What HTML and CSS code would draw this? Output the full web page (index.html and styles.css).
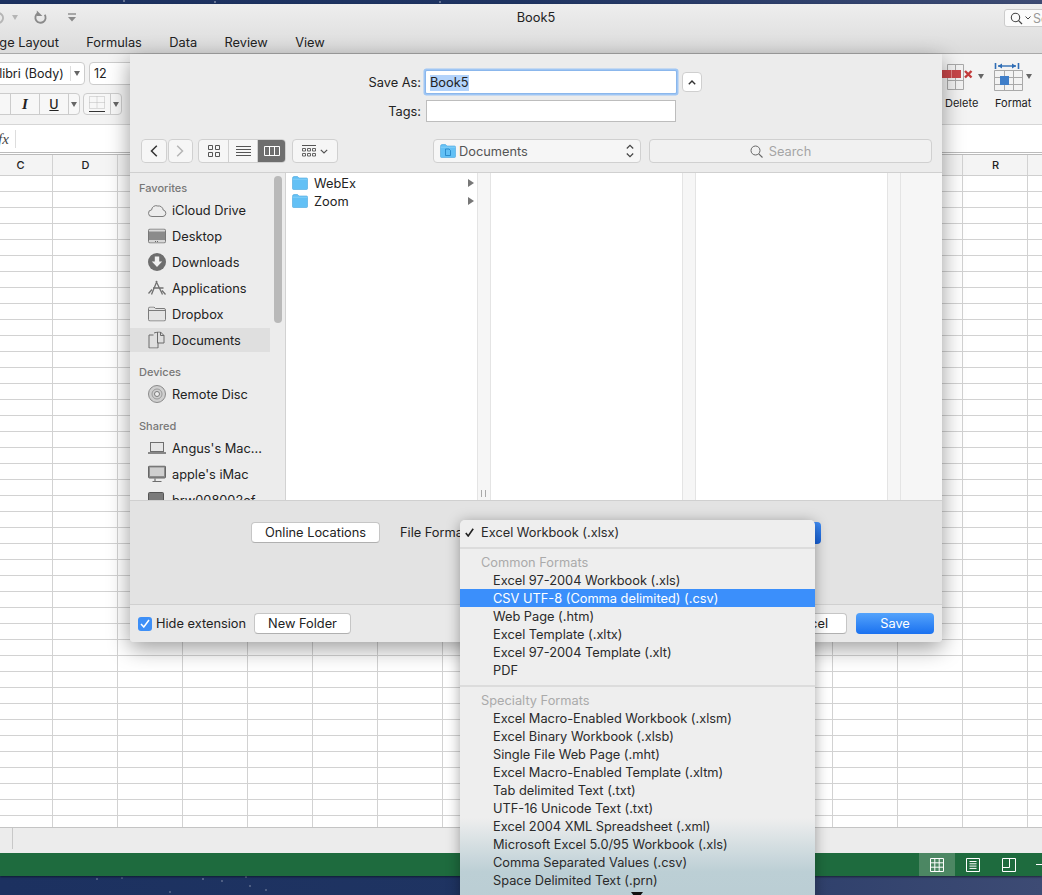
FILE: index.html
```html
<!DOCTYPE html>
<html lang="en">
<head>
    <meta charset="UTF-8">
    <meta name="viewport" content="width=device-width, initial-scale=1.0">
    <title>Book5 - Save As</title>
    <link rel="stylesheet" href="styles.css">
</head>
<body>
    <svg class="defs" width="0" height="0">
        <symbol id="folder" viewBox="0 0 16 14">
            <path d="M0.5 2.5Q0.5 0.5 2 0.5H5.5L7 2H14.5Q15.5 2 15.5 3V12.5Q15.5 13.5 14.5 13.5H1.5Q0.5 13.5 0.5 12.5Z" fill="#62c0f5" stroke="#4aa6de" stroke-width="0.6"/>
            <path d="M0.6 3.2H15.4" stroke="#8fd3f8" stroke-width="0.8"/>
        </symbol>
    </svg>

    <!-- excel window behind the dialog -->
    <div class="excel">
        <div class="titlebar">
            <div class="quick">
                <svg class="undo" width="12" height="14" viewBox="0 0 12 14"><path d="M1 3A5 5 0 1 1 1 11" fill="none" stroke="#b5b5b5" stroke-width="2"/></svg>
                <span class="tiny-arrow light"></span>
                <svg class="redo" width="14" height="15" viewBox="0 0 15 16"><path d="M4 3.5A5.5 5.5 0 1 0 11.5 5" fill="none" stroke="#8a8a8a" stroke-width="2"/><path d="M3 0.5V6.5H9Z" fill="#8a8a8a"/></svg>
                <svg class="customize" width="10" height="9" viewBox="0 0 10 9"><path d="M1 1H9" stroke="#8a8a8a" stroke-width="1.4"/><path d="M1 4H9L5 8.5Z" fill="#8a8a8a"/></svg>
            </div>
            <div class="doc-title">Book5</div>
            <div class="sheet-search">
                <svg width="13" height="13" viewBox="0 0 13 13"><circle cx="5.5" cy="5.5" r="4.2" fill="none" stroke="#444" stroke-width="1.1"/><path d="M8.6 8.6L12 12" stroke="#444" stroke-width="1.2"/></svg>
                <svg width="6" height="4" viewBox="0 0 6 4"><path d="M0.5 0.5L3 3L5.5 0.5" fill="none" stroke="#444"/></svg>
                <span>Se</span>
            </div>
            <div class="tabs">
                <span class="tab first">Page Layout</span>
                <span class="tab">Formulas</span>
                <span class="tab">Data</span>
                <span class="tab">Review</span>
                <span class="tab">View</span>
            </div>
        </div>

        <div class="ribbon">
            <div class="ribbon-left">
                <div class="ribbon-row">
                    <div class="combo font-combo"><span>Calibri (Body)</span><i class="combo-arrow"></i></div>
                    <div class="combo size-combo"><span>12</span></div>
                </div>
                <div class="ribbon-row second">
                    <div class="btn-group style-group">
                        <span class="cell bold"></span>
                        <span class="cell italic">I</span>
                        <span class="cell under">U</span>
                        <span class="cell arrow-cell"><span class="tiny-arrow"></span></span>
                    </div>
                    <div class="btn-group border-group">
                        <span class="cell border-cell">
                            <svg width="18" height="18" viewBox="0 0 18 18"><path d="M1.5 1.5H16.5V13.5H1.5ZM9 1.5V13.5M1.5 7.5H16.5" fill="none" stroke="#bbb" stroke-dasharray="1 1"/><path d="M1 16.5H17" stroke="#333"/></svg>
                        </span>
                        <span class="cell arrow-cell"><span class="tiny-arrow"></span></span>
                    </div>
                </div>
            </div>
            <div class="ribbon-right">
                <div class="ribbon-tool delete-tool">
                    <div class="tool-icon">
                        <svg width="34" height="28" viewBox="0 0 34 28"><path d="M5.5 1.5H21.5V26.5H5.5ZM13.5 1.5V26.5M5.5 17.5H21.5" fill="none" stroke="#a9a9a9"/><rect x="0" y="7" width="19" height="8" fill="#c8474a"/><path d="M9.5 7V15" stroke="#e48a8a"/><path d="M23 8L29.5 14.5M29.5 8L23 14.5" stroke="#c23a3a" stroke-width="2.4"/></svg>
                        <span class="tiny-arrow"></span>
                    </div>
                    <span class="tool-label">Delete</span>
                </div>
                <div class="ribbon-tool format-tool">
                    <div class="tool-icon">
                        <svg width="30" height="28" viewBox="0 0 30 28"><path d="M1.5 0V6M24.5 0V6" stroke="#2f6db5" stroke-width="1.6"/><path d="M4 3H22" stroke="#2f6db5" stroke-width="1.4"/><path d="M4 3L8 0.5V5.5ZM22 3L18 0.5V5.5Z" fill="#2f6db5"/><path d="M0.5 7.5H28.5V27.5H0.5ZM10.5 7.5V27.5M19.5 7.5V27.5M0.5 14.5H28.5M0.5 21.5H28.5" fill="none" stroke="#a9a9a9"/><rect x="6" y="13" width="9" height="9" fill="#3f7ec9"/></svg>
                        <span class="tiny-arrow"></span>
                    </div>
                    <span class="tool-label">Format</span>
                </div>
            </div>
        </div>

        <div class="formula-bar"><span class="fx">fx</span></div>

        <div class="col-headers">
            <span class="col-name">C</span>
            <span class="col-name">D</span>
            <span class="col-gap"></span>
            <span class="col-name">R</span>
        </div>
        <div class="grid"></div>

        <div class="sheet-bar"><span class="sheet-line"></span></div>
        <div class="status-bar">
            <span class="view-btn on">
                <svg width="14" height="14" viewBox="0 0 14 14"><path d="M0.5 0.5H13.5V13.5H0.5ZM4.8 0.5V13.5M9.2 0.5V13.5M0.5 4.8H13.5M0.5 9.2H13.5" fill="none" stroke="#fff"/></svg>
            </span>
            <span class="view-btn">
                <svg width="14" height="14" viewBox="0 0 14 14"><path d="M0.5 0.5H13.5V13.5H0.5Z" fill="none" stroke="#fff"/><path d="M3.5 3.5H10.5M3.5 5.8H10.5M3.5 8.1H10.5M3.5 10.4H10.5" stroke="#fff"/></svg>
            </span>
            <span class="view-btn">
                <svg width="14" height="14" viewBox="0 0 14 14"><path d="M0.5 0.5H13.5V13.5H0.5ZM0.5 9.5H7.5V0.5" fill="none" stroke="#fff"/></svg>
            </span>
            <span class="zoom-minus"></span>
        </div>
    </div>

    <!-- save dialog -->
    <div class="dialog">
        <div class="dialog-head">
            <div class="name-row">
                <label class="field-label">Save As:</label>
                <div class="name-field"><span class="selected">Book5</span></div>
                <button class="collapse-btn">
                    <svg width="8" height="5" viewBox="0 0 8 5"><path d="M0.8 4.2L4 1L7.2 4.2" fill="none" stroke="#333" stroke-width="1.4"/></svg>
                </button>
            </div>
            <div class="tags-row">
                <label class="field-label">Tags:</label>
                <div class="tags-field"></div>
            </div>
            <div class="toolbar">
                <div class="seg nav">
                    <span class="seg-btn back"><svg width="8" height="12" viewBox="0 0 8 12"><path d="M6.8 0.8L1.5 6L6.8 11.2" fill="none" stroke="#333" stroke-width="1.5"/></svg></span>
                    <span class="seg-btn forward"><svg width="8" height="12" viewBox="0 0 8 12"><path d="M1.2 0.8L6.5 6L1.2 11.2" fill="none" stroke="#b5b5b5" stroke-width="1.5"/></svg></span>
                </div>
                <div class="seg views">
                    <span class="seg-btn"><svg width="12" height="12" viewBox="0 0 12 12"><path d="M0.5 0.5H4.5V4.5H0.5ZM7.5 0.5H11.5V4.5H7.5ZM0.5 7.5H4.5V11.5H0.5ZM7.5 7.5H11.5V11.5H7.5Z" fill="none" stroke="#555"/></svg></span>
                    <span class="seg-btn"><svg width="15" height="11" viewBox="0 0 15 11"><path d="M0 0.5H15M0 3.5H15M0 6.5H15M0 9.5H15" stroke="#555"/></svg></span>
                    <span class="seg-btn active"><svg width="16" height="10" viewBox="0 0 16 10"><path d="M0.5 0.5H15.5V9.5H0.5ZM5.5 0.5V9.5M10.5 0.5V9.5" fill="none" stroke="#fff"/></svg></span>
                </div>
                <div class="seg arrange">
                    <svg width="14" height="12" viewBox="0 0 14 12"><path d="M0 0.5H14" stroke="#555"/><path d="M0.5 3.5H3.5V6H0.5ZM5.5 3.5H8.5V6H5.5ZM10.5 3.5H13.5V6H10.5ZM0.5 8.5H3.5V11H0.5ZM5.5 8.5H8.5V11H5.5ZM10.5 8.5H13.5V11H10.5Z" fill="none" stroke="#555" stroke-width="0.9"/></svg>
                    <svg width="8" height="5" viewBox="0 0 8 5"><path d="M0.8 0.8L4 4L7.2 0.8" fill="none" stroke="#555" stroke-width="1.2"/></svg>
                </div>
                <div class="where">
                    <svg class="where-icon" width="16" height="14" viewBox="0 0 16 14"><use href="#folder"/><path d="M5.5 5H9L10.5 6.5V11.5H5.5Z" fill="none" stroke="#1f7fc0" stroke-width="0.8"/></svg>
                    <span class="where-name">Documents</span>
                    <svg class="updown" width="8" height="14" viewBox="0 0 8 14"><path d="M0.8 4.5L4 1.3L7.2 4.5M0.8 9.5L4 12.7L7.2 9.5" fill="none" stroke="#444" stroke-width="1.2"/></svg>
                </div>
                <div class="search">
                    <svg width="13" height="13" viewBox="0 0 13 13"><circle cx="5.5" cy="5.5" r="4.5" fill="none" stroke="#666"/><path d="M8.8 8.8L12.5 12.5" stroke="#666" stroke-width="1.1"/></svg>
                    <span>Search</span>
                </div>
            </div>
        </div>

        <div class="browser">
            <div class="sidebar">
                <div class="side-label">Favorites</div>
                <div class="side-item">
                    <svg width="19" height="14" viewBox="0 0 19 14"><path d="M4 13.5A3.3 3.3 0 0 1 3.6 6.9A4.5 4.5 0 0 1 9.8 3A4.6 4.6 0 0 1 15.2 7A3.3 3.3 0 0 1 15 13.5Z" fill="none" stroke="#7b7b7b"/></svg>
                    <span>iCloud Drive</span>
                </div>
                <div class="side-item">
                    <svg width="18" height="15" viewBox="0 0 18 15"><rect x="0.5" y="0.5" width="17" height="14" rx="1.5" fill="#d8d8d8" stroke="#777"/><rect x="1" y="3" width="16" height="8.5" fill="#8b8b8b"/><path d="M7 13H11" stroke="#666" stroke-dasharray="1 1"/></svg>
                    <span>Desktop</span>
                </div>
                <div class="side-item">
                    <svg width="18" height="18" viewBox="0 0 18 18"><circle cx="9" cy="9" r="9" fill="#6e6e6e"/><path d="M6.8 3.5H11.2V8.5H14.2L9 14L3.8 8.5H6.8Z" fill="#f0f0f0"/></svg>
                    <span>Downloads</span>
                </div>
                <div class="side-item">
                    <svg width="18" height="17" viewBox="0 0 18 17"><path d="M9 1.5L3.5 15M8 1.5L14.5 15M5 8.5H15.5M0.5 14L4 10M17.5 15L14 11" fill="none" stroke="#707070" stroke-width="1.3"/></svg>
                    <span>Applications</span>
                </div>
                <div class="side-item">
                    <svg width="18" height="15" viewBox="0 0 18 15"><path d="M0.5 2Q0.5 0.5 2 0.5H6L7.5 2H16Q17.5 2 17.5 3.5V13Q17.5 14.5 16 14.5H2Q0.5 14.5 0.5 13Z" fill="#e4e4e4" stroke="#7b7b7b"/><path d="M0.5 4H17.5" stroke="#7b7b7b"/></svg>
                    <span>Dropbox</span>
                </div>
                <div class="side-item selected-item">
                    <svg width="17" height="17" viewBox="0 0 17 17"><path d="M5.5 3.5H1V16.5H10V11M6 1.5L9.5 0.5V11.5H16V4L12.5 0.5H9.5" fill="none" stroke="#6a6a6a"/><path d="M12.5 0.5V4H16" fill="none" stroke="#6a6a6a"/></svg>
                    <span>Documents</span>
                </div>
                <div class="side-label gap first-gap">Devices</div>
                <div class="side-item">
                    <svg width="18" height="18" viewBox="0 0 18 18"><circle cx="9" cy="9" r="8.5" fill="#cfcfcf" stroke="#8a8a8a"/><circle cx="9" cy="9" r="5" fill="none" stroke="#9a9a9a"/><circle cx="9" cy="9" r="2.5" fill="#eee" stroke="#7b7b7b"/></svg>
                    <span>Remote Disc</span>
                </div>
                <div class="side-label gap">Shared</div>
                <div class="side-item">
                    <svg width="18" height="12" viewBox="0 0 18 12"><rect x="2.5" y="0.5" width="13" height="9" fill="#e6e6e6" stroke="#6e6e6e"/><path d="M0 11H18" stroke="#6e6e6e" stroke-width="1.6"/></svg>
                    <span>Angus's Mac...</span>
                </div>
                <div class="side-item">
                    <svg width="18" height="17" viewBox="0 0 18 17"><rect x="0.5" y="0.5" width="17" height="12" rx="1" fill="#8b8b8b" stroke="#666"/><rect x="2" y="2" width="14" height="8.5" fill="#cfcfcf"/><path d="M7 13V15.5M4.5 16H13.5" stroke="#6e6e6e" stroke-width="1.2"/></svg>
                    <span>apple's iMac</span>
                </div>
                <div class="side-item">
                    <svg width="16" height="16" viewBox="0 0 16 16"><rect x="0.5" y="0.5" width="15" height="15" rx="1" fill="#7b7b7b" stroke="#555"/></svg>
                    <span>brw008002ef</span>
                </div>
            </div>
            <div class="side-scroll"></div>
            <div class="column first-col">
                <div class="file-row">
                    <svg width="16" height="14" viewBox="0 0 16 14"><use href="#folder"/></svg>
                    <span>WebEx</span>
                    <i class="disclose"></i>
                </div>
                <div class="file-row">
                    <svg width="16" height="14" viewBox="0 0 16 14"><use href="#folder"/></svg>
                    <span>Zoom</span>
                    <i class="disclose"></i>
                </div>
            </div>
            <div class="col-gutter"><span class="grip"></span></div>
            <div class="column"></div>
            <div class="col-gutter"></div>
            <div class="column"></div>
            <div class="col-gutter"></div>
            <div class="column last-col"></div>
        </div>

        <div class="options">
            <button class="mac-btn online">Online Locations</button>
            <span class="format-label">File Format:</span>
            <div class="format-popup"></div>
        </div>

        <div class="dialog-foot">
            <span class="check">
                <svg width="10" height="9" viewBox="0 0 10 9"><path d="M1 5L3.8 8L9 1" fill="none" stroke="#fff" stroke-width="1.5"/></svg>
            </span>
            <span class="hide-label">Hide extension</span>
            <button class="mac-btn new-folder">New Folder</button>
            <button class="mac-btn cancel">Cancel</button>
            <button class="mac-btn save">Save</button>
        </div>
    </div>

    <!-- file format popup, open over the dialog -->
    <div class="menu">
        <div class="menu-item top">
            <svg class="tick" width="9" height="9" viewBox="0 0 9 9"><path d="M0.8 5L3.2 8L8.2 0.8" fill="none" stroke="#222" stroke-width="1.6"/></svg>
            Excel Workbook (.xlsx)
        </div>
        <div class="menu-sep"></div>
        <div class="menu-head">Common Formats</div>
        <div class="menu-item">Excel 97-2004 Workbook (.xls)</div>
        <div class="menu-item hot">CSV UTF-8 (Comma delimited) (.csv)</div>
        <div class="menu-item">Web Page (.htm)</div>
        <div class="menu-item">Excel Template (.xltx)</div>
        <div class="menu-item">Excel 97-2004 Template (.xlt)</div>
        <div class="menu-item">PDF</div>
        <div class="menu-sep"></div>
        <div class="menu-head">Specialty Formats</div>
        <div class="menu-item">Excel Macro-Enabled Workbook (.xlsm)</div>
        <div class="menu-item">Excel Binary Workbook (.xlsb)</div>
        <div class="menu-item">Single File Web Page (.mht)</div>
        <div class="menu-item">Excel Macro-Enabled Template (.xltm)</div>
        <div class="menu-item">Tab delimited Text (.txt)</div>
        <div class="menu-item">UTF-16 Unicode Text (.txt)</div>
        <div class="menu-item">Excel 2004 XML Spreadsheet (.xml)</div>
        <div class="menu-item">Microsoft Excel 5.0/95 Workbook (.xls)</div>
        <div class="menu-item">Comma Separated Values (.csv)</div>
        <div class="menu-item">Space Delimited Text (.prn)</div>
        <div class="menu-more"></div>
    </div>
</body>
</html>
```

FILE: styles.css
```css
* {
    box-sizing: border-box;
}
html, body {
    margin: 0;
    height: 895px;
    overflow: hidden;
}
body {
    position: relative;
    width: 1042px;
    font-family: "Inter", "Liberation Sans", sans-serif;
    font-size: 12.5px;
    color: #222;
    background-color: #1c315f;
    /* wallpaper: a few stars over navy */
    background-image:
        radial-gradient(circle 1.5px at 97px 879px, rgba(255, 255, 255, 0.4), transparent),
        radial-gradient(circle 1.5px at 122px 878px, rgba(255, 255, 255, 0.3), transparent),
        radial-gradient(circle 1.5px at 203px 879px, rgba(255, 255, 255, 0.45), transparent),
        radial-gradient(circle 1.5px at 222px 881px, rgba(255, 255, 255, 0.4), transparent),
        radial-gradient(circle 1.5px at 246px 877px, rgba(255, 255, 255, 0.4), transparent),
        radial-gradient(circle 1.5px at 250px 886px, rgba(255, 255, 255, 0.4), transparent),
        radial-gradient(circle 1.5px at 266px 890px, rgba(255, 255, 255, 0.4), transparent),
        radial-gradient(circle 1.5px at 170px 892px, rgba(255, 255, 255, 0.4), transparent),
        radial-gradient(circle 1.5px at 124px 1px, rgba(255, 255, 255, 0.6), transparent),
        radial-gradient(circle 1.5px at 215px 2px, rgba(255, 255, 255, 0.6), transparent),
        radial-gradient(circle 1.5px at 440px 2px, rgba(255, 255, 255, 0.6), transparent),
        linear-gradient(90deg, #1c3160 0, #1f3462 50%, #3d4b74 100%);
}
.defs {
    position: absolute;
}
button {
    font: inherit;
    color: inherit;
}

/* excel window */
.excel {
    position: absolute;
    left: 0;
    top: 4px;
    width: 1042px;
    height: 872px;
    display: flex;
    flex-direction: column;
    background-color: #fff;
    box-shadow: 0 1px 2px rgba(0, 0, 0, 0.5);
}
.titlebar {
    position: relative;
    height: 50px;
    flex: none;
    background: linear-gradient(#eeeeee, #dbdbdb);
    border-bottom: 1px solid #a9a9a9;
}
.quick {
    position: absolute;
    left: -6px;
    top: 6px;
    display: flex;
    align-items: center;
    gap: 6px;
}
.redo {
    margin-left: 10px;
}
.customize {
    margin-left: 13px;
}
.tiny-arrow {
    display: inline-block;
    width: 0;
    height: 0;
    border-left: 3.5px solid transparent;
    border-right: 3.5px solid transparent;
    border-top: 5px solid #666;
}
.tiny-arrow.light {
    border-top-color: #b5b5b5;
}
.doc-title {
    position: absolute;
    left: 0;
    right: 0;
    top: 6px;
    text-align: center;
    padding-left: 30px;
    font-size: 12.8px;
}
.sheet-search {
    position: absolute;
    left: 1004px;
    top: 5px;
    width: 60px;
    height: 18px;
    display: flex;
    align-items: center;
    gap: 2px;
    padding-left: 5px;
    background-color: #fbfbfb;
    border: 1px solid #ccc;
    border-radius: 3px;
    color: #999;
}
.tabs {
    position: absolute;
    left: 0;
    top: 31px;
    display: flex;
    gap: 27.4px;
    font-size: 12.8px;
    white-space: nowrap;
}
.tab.first {
    margin-left: -16px;
}

.ribbon {
    height: 71px;
    flex: none;
    display: flex;
    justify-content: space-between;
    background-color: #f3f3f3;
    border-bottom: 1px solid #d6d6d6;
}
.ribbon-row {
    display: flex;
    gap: 4px;
    padding-top: 8px;
}
.ribbon-row.second {
    gap: 3px;
}
.combo {
    height: 23px;
    display: flex;
    align-items: center;
    background-color: #fff;
    border: 1px solid #ccc;
    border-radius: 4px;
    white-space: nowrap;
}
.font-combo {
    width: 107px;
    margin-left: -22px;
    padding-left: 4px;
    justify-content: space-between;
}
.combo-arrow {
    width: 14px;
    height: 15px;
    border-left: 1px solid #ddd;
    position: relative;
}
.combo-arrow::after {
    content: "";
    position: absolute;
    left: 3px;
    top: 5px;
    border-left: 3.5px solid transparent;
    border-right: 3.5px solid transparent;
    border-top: 5px solid #666;
}
.size-combo {
    width: 60px;
    padding-left: 4px;
}
.btn-group {
    height: 22px;
    display: flex;
    background-color: #f7f7f7;
    border: 1px solid #ccc;
    border-radius: 4px;
}
.style-group {
    margin-left: -12px;
}
.cell {
    display: flex;
    align-items: center;
    justify-content: center;
    border-left: 1px solid #ccc;
    height: 100%;
}
.cell:first-child {
    border-left: 0;
}
.cell.bold {
    width: 21px;
}
.cell.italic {
    width: 29px;
    font-family: "Liberation Serif", serif;
    font-style: italic;
    font-weight: bold;
    font-size: 15px;
}
.cell.under {
    width: 29px;
    text-decoration: underline;
    font-weight: 500;
}
.cell.arrow-cell {
    width: 11px;
}
.cell.border-cell {
    width: 26px;
}
.ribbon-right {
    display: flex;
    gap: 10px;
    padding-top: 9px;
    padding-right: 10px;
}
.ribbon-tool {
    display: flex;
    flex-direction: column;
}
.tool-icon {
    display: flex;
    align-items: flex-start;
    height: 33px;
    gap: 2px;
}
.tool-icon .tiny-arrow {
    margin-top: 11px;
}
.tool-label {
    font-size: 11px;
    line-height: 14px;
}
.delete-tool .tool-label {
    padding-left: 3px;
}
.format-tool .tool-label {
    padding-left: 1px;
}

.formula-bar {
    height: 30px;
    flex: none;
    display: flex;
    align-items: center;
    background-color: #fff;
    border-bottom: 3px double #bbb;
}
.fx {
    width: 24px;
    height: 18px;
    line-height: 18px;
    margin-left: -8px;
    font-family: "Liberation Serif", serif;
    font-style: italic;
    font-size: 15px;
    color: #444;
    border-right: 1px solid #ddd;
    flex: none;
    text-align: center;
}
.col-headers {
    height: 21px;
    flex: none;
    display: flex;
    margin-left: -12px;
    background-color: #f4f4f4;
    background-image: repeating-linear-gradient(90deg, transparent 0, transparent 64px, #d2d2d2 64px, #d2d2d2 65px);
    border-bottom: 1px solid #cfcfcf;
}
.col-name {
    width: 65px;
    text-align: center;
    line-height: 20px;
    font-size: 11px;
    font-weight: 500;
}
.col-gap {
    width: 845px;
}
.grid {
    flex: 1;
    margin-left: -12px;
    background-color: #fff;
    background-image:
        repeating-linear-gradient(90deg, transparent 0, transparent 64px, #d2d2d2 64px, #d2d2d2 65px),
        repeating-linear-gradient(180deg, transparent 0, transparent 15px, #d2d2d2 15px, #d2d2d2 16px);
}
.sheet-bar {
    height: 26px;
    flex: none;
    background-color: #ececec;
    border-top: 1px solid #c4c4c4;
    padding-left: 12px;
}
.sheet-line {
    display: block;
    width: 1px;
    height: 21px;
    background-color: #c8c8c8;
}
.status-bar {
    height: 23px;
    flex: none;
    display: flex;
    justify-content: flex-end;
    align-items: stretch;
    background-color: #1e6b3e;
}
.view-btn {
    width: 36px;
    display: flex;
    align-items: center;
    justify-content: center;
}
.view-btn.on {
    background-color: #4c8763;
}
.zoom-minus {
    width: 15px;
    position: relative;
    margin-left: 1px;
    margin-right: -1px;
}
.zoom-minus::after {
    content: "";
    position: absolute;
    left: 8px;
    top: 11px;
    width: 7px;
    height: 1px;
    background-color: #fff;
}

/* save dialog */
.dialog {
    position: absolute;
    left: 130px;
    top: 54px;
    width: 812px;
    height: 588px;
    display: flex;
    flex-direction: column;
    background-color: #ececec;
    border-radius: 0 0 4px 4px;
    box-shadow: 0 6px 22px rgba(0, 0, 0, 0.4);
}
.dialog-head {
    height: 119px;
    flex: none;
    padding-top: 17px;
    border-bottom: 1px solid #d0d0d0;
    font-size: 12.8px;
}
.name-row, .tags-row {
    display: flex;
    align-items: center;
}
.field-label {
    width: 296px;
    text-align: right;
    padding-right: 5px;
}
.name-field {
    width: 250px;
    height: 22px;
    display: flex;
    align-items: center;
    padding-left: 4px;
    padding-top: 1px;
    background-color: #fff;
    box-shadow: 0 0 0 1px #8bb7ec, 0 0 0 2.5px #9fc6f4;
    border-radius: 1px;
}
.selected {
    background-color: #b3d3fb;
    line-height: 16px;
    height: 16px;
}
.collapse-btn {
    width: 20px;
    height: 20px;
    margin-left: 6px;
    padding: 0;
    display: flex;
    align-items: center;
    justify-content: center;
    background-color: #fff;
    border: 1px solid #cfcfcf;
    border-radius: 4px;
}
.tags-row {
    margin-top: 7px;
}
.tags-field {
    width: 250px;
    height: 22px;
    background-color: #fff;
    border: 1px solid #bdbdbd;
}
.toolbar {
    display: flex;
    align-items: center;
    height: 24px;
    margin-top: 17px;
    padding-left: 11px;
}
.seg {
    height: 24px;
    display: flex;
    background-color: #f6f6f6;
    border: 1px solid #d0d0d0;
    border-radius: 4px;
    overflow: hidden;
}
.seg-btn {
    display: flex;
    align-items: center;
    justify-content: center;
    border-left: 1px solid #d0d0d0;
}
.seg-btn:first-child {
    border-left: 0;
}
.nav {
    width: 52px;
    background-color: transparent;
    border: 0;
    gap: 1px;
}
.nav .seg-btn {
    width: 25.5px;
    border: 1px solid #d0d0d0;
    border-radius: 4px;
    background-color: #f6f6f6;
}
.views {
    width: 88px;
    margin-left: 5px;
}
.views .seg-btn {
    width: 29px;
}
.seg-btn.active {
    flex: 1;
    background-color: #6e6e6e;
}
.arrange {
    width: 46px;
    margin-left: 6px;
    align-items: center;
    justify-content: center;
    gap: 4px;
}
.where {
    width: 208px;
    height: 24px;
    margin-left: 95px;
    display: flex;
    align-items: center;
    padding-left: 6px;
    gap: 3px;
    background-color: #f6f6f6;
    border: 1px solid #d0d0d0;
    border-radius: 4px;
    color: #555;
}
.updown {
    margin-left: auto;
    margin-right: 6px;
}
.search {
    width: 283px;
    height: 24px;
    margin-left: 8px;
    padding-right: 20px;
    display: flex;
    align-items: center;
    justify-content: center;
    gap: 6px;
    background-color: #f1f1f1;
    border: 1px solid #d0d0d0;
    border-radius: 4px;
    color: #a5a5a5;
}

.browser {
    height: 327px;
    flex: none;
    position: relative;
    display: flex;
    overflow: hidden;
    background-color: #f6f6f6;
}
.sidebar {
    width: 156px;
    flex: none;
    height: 327px;
    overflow: hidden;
    padding-top: 6px;
    background-color: #ececec;
    border-right: 1px solid #d2d2d2;
    font-size: 12.8px;
}
.side-scroll {
    position: absolute;
    left: 144px;
    top: 3px;
    width: 8px;
    height: 147px;
    background-color: #b9b9b9;
    border-radius: 4px;
}
.side-label {
    height: 18px;
    line-height: 18px;
    padding-left: 9px;
    font-size: 11px;
    font-weight: 500;
    color: #777;
}
.side-label.gap {
    margin-top: 10px;
}
.side-label.first-gap {
    margin-top: 11px;
}
.side-item {
    width: 140px;
    height: 26px;
    display: flex;
    align-items: center;
    padding-left: 18px;
    position: relative;
    white-space: nowrap;
}
.side-item svg {
    position: absolute;
    left: 18px;
    top: 50%;
    transform: translateY(-50%);
}
.side-item span {
    margin-left: 24px;
}
.selected-item {
    height: 24px;
    margin: 1px 0;
    background-color: #dfdfdf;
}
.column {
    width: 191px;
    flex: none;
    background-color: #fff;
}
.first-col {
    padding-top: 1px;
    font-size: 12.8px;
}
.last-col {
    flex: 1;
    background-color: #f6f6f6;
}
.col-gutter {
    width: 14px;
    flex: none;
    position: relative;
    background-color: #f6f6f6;
    border-left: 1px solid #e4e4e4;
    border-right: 1px solid #e4e4e4;
}
.grip {
    position: absolute;
    left: 3px;
    bottom: 3px;
    width: 5px;
    height: 7px;
    border-left: 1px solid #aaa;
    border-right: 1px solid #aaa;
}
.file-row {
    height: 18px;
    display: flex;
    align-items: center;
    gap: 6px;
    padding-left: 6px;
    padding-right: 3px;
}
.disclose {
    margin-left: auto;
    border-left: 6px solid #777;
    border-top: 4px solid transparent;
    border-bottom: 4px solid transparent;
}

.options {
    height: 104px;
    flex: none;
    position: relative;
    display: flex;
    align-items: flex-start;
    padding-top: 21px;
    padding-left: 121px;
    background-color: #e3e3e3;
    border-top: 1px solid #d0d0d0;
    font-size: 12.8px;
}
.mac-btn {
    height: 21px;
    padding: 0;
    background-color: #fff;
    border: 1px solid #c6c6c6;
    border-bottom-color: #b0b0b0;
    border-radius: 4px;
}
.online {
    width: 129px;
}
.format-label {
    margin-left: 20px;
    line-height: 22px;
}
.format-popup {
    position: absolute;
    left: 500px;
    top: 21px;
    width: 191px;
    height: 22px;
    border-radius: 4px;
    background: linear-gradient(#3f8df7, #1560d8);
}
.dialog-foot {
    height: 38px;
    flex: none;
    display: flex;
    align-items: center;
    padding-left: 8px;
    padding-right: 8px;
    background-color: #e9e9e9;
    border-top: 1px solid #d0d0d0;
    border-radius: 0 0 4px 4px;
    font-size: 12.8px;
}
.check {
    width: 14px;
    height: 14px;
    display: flex;
    align-items: center;
    justify-content: center;
    background-color: #3d8ff7;
    border-radius: 3px;
}
.hide-label {
    width: 90px;
    margin-left: 4px;
    white-space: nowrap;
}
.new-folder {
    width: 97px;
    margin-left: 8px;
}
.cancel {
    width: 80px;
    margin-left: auto;
}
.save {
    width: 78px;
    margin-left: 9px;
    color: #fff;
    border: 0;
    background: linear-gradient(#54a3fb, #1a71f0);
}

/* popup menu */
.menu {
    position: absolute;
    left: 460px;
    top: 520px;
    width: 355px;
    height: 400px;
    padding-top: 3px;
    background: linear-gradient(#eeeeee 0, #eeeeee 298px, #bccfd5 352px, #b9ccd3 100%);
    border-radius: 5px 5px 0 0;
    box-shadow: 0 2px 14px rgba(0, 0, 0, 0.35);
    font-size: 12.8px;
}
.menu-item {
    height: 18px;
    line-height: 20px;
    padding-left: 33px;
    color: #2a2a2a;
    white-space: nowrap;
}
.menu-item.top {
    padding-left: 21px;
    position: relative;
}
.tick {
    position: absolute;
    left: 5px;
    top: 5px;
}
.menu-item.hot {
    background-color: #3b8ffb;
    color: #fff;
}
.menu-sep {
    height: 2px;
    margin-top: 6px;
    margin-bottom: 4px;
    background-color: #dcdcdc;
}
.menu-head {
    height: 18px;
    line-height: 20px;
    padding-left: 21px;
    color: #aaa;
}
.menu-more {
    width: 0;
    height: 0;
    margin: 3px 0 0 171px;
    border-left: 6px solid transparent;
    border-right: 6px solid transparent;
    border-top: 8px solid #111;
}
```
